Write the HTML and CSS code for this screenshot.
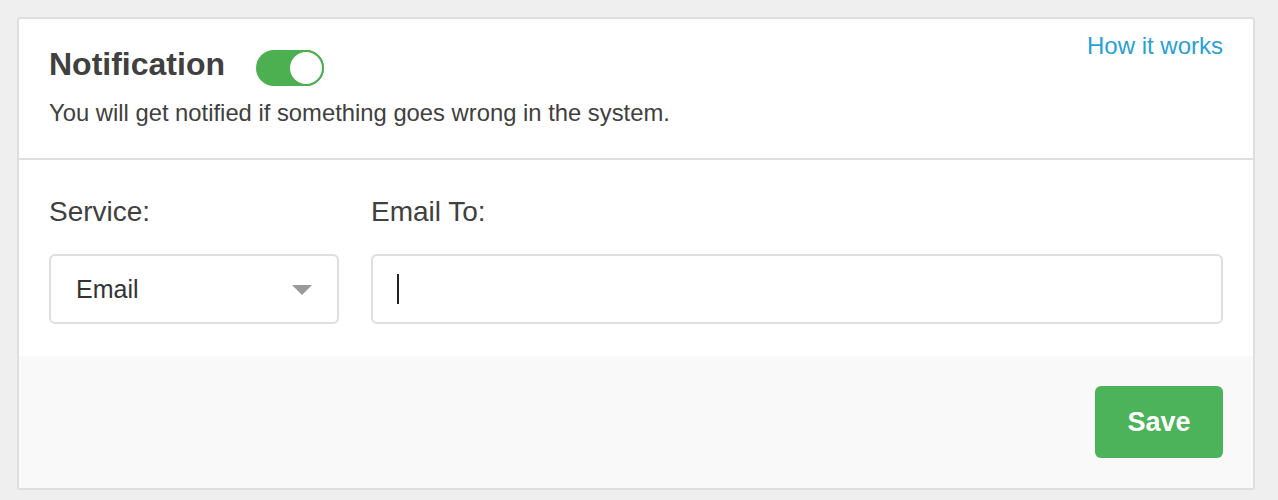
FILE: index.html
```html
<!DOCTYPE html>
<html>
<head>
<meta charset="utf-8">
<link rel="stylesheet" href="styles.css">
</head>
<body>
<div class="card">
  <div class="card-header">
    <div class="header-main">
      <div class="title-row">
        <h1 class="title">Notification</h1>
        <span class="toggle"><span class="knob"></span></span>
      </div>
      <p class="desc">You will get notified if something goes wrong in the system.</p>
    </div>
    <a class="link" href="#">How it works</a>
  </div>
  <div class="card-body">
    <div class="field field-service">
      <label class="label">Service:</label>
      <div class="select"><span class="select-value">Email</span><span class="caret"></span></div>
    </div>
    <div class="field field-email">
      <label class="label">Email To:</label>
      <div class="input"><span class="cursor"></span></div>
    </div>
  </div>
  <div class="card-footer">
    <button class="save">Save</button>
  </div>
</div>
</body>
</html>
```
FILE: styles.css
```css
* { box-sizing: border-box; }
html, body { margin: 0; padding: 0; }
body {
  background: #efefef;
  font-family: "Liberation Sans", Arial, sans-serif;
  color: #404040;
  padding: 17px 0 0 17px;
}
.card {
  width: 1238px;
  background: #fff;
  border: 2px solid #dedede;
  border-radius: 3px;
  overflow: hidden;
}
.card-header {
  display: flex;
  justify-content: space-between;
  align-items: flex-start;
  padding: 14px 30px 0 30px;
  height: 141px;
  border-bottom: 2px solid #dedede;
}
.title-row {
  display: flex;
  align-items: flex-start;
  gap: 31px;
  margin-top: 13px;
}
.title {
  margin: 0;
  font-size: 32px;
  font-weight: bold;
  line-height: 36px;
  color: #404040;
}
.toggle {
  position: relative;
  display: inline-block;
  width: 68px;
  height: 36px;
  border-radius: 18px;
  background: #4caf50;
  margin-top: 4px;
}
.knob {
  position: absolute;
  right: 0;
  top: 0;
  width: 36px;
  height: 36px;
  border-radius: 50%;
  background: #fff;
  border: 2px solid #4caf50;
}
.desc {
  margin: 12px 0 0 0;
  font-size: 23.8px;
  line-height: 30px;
  color: #404040;
}
.link {
  color: #2a9fd6;
  text-decoration: none;
  font-size: 24px;
  line-height: 30px;
  margin-top: -2px;
}
.card-body {
  display: flex;
  gap: 32px;
  padding: 36px 30px 32px 30px;
}
.field { display: flex; flex-direction: column; }
.field-service { width: 290px; }
.field-email { flex: 1; }
.label {
  font-size: 28px;
  line-height: 32px;
  color: #404040;
  margin-bottom: 26px;
}
.select, .input {
  height: 70px;
  border: 2px solid #dedede;
  border-radius: 6px;
  display: flex;
  align-items: center;
  background: #fff;
}
.select {
  justify-content: space-between;
  padding: 0 25px 0 25px;
}
.select-value {
  font-size: 25px;
  color: #333;
}
.caret {
  width: 0;
  height: 0;
  border-left: 10px solid transparent;
  border-right: 10px solid transparent;
  border-top: 10px solid #999;
  margin-top: 2px;
}
.input { padding-left: 24px; }
.cursor {
  display: block;
  width: 2px;
  height: 30px;
  background: #222;
}
.card-footer {
  background: #f9f9f9;
  display: flex;
  justify-content: flex-end;
  padding: 30px 30px 30px 30px;
}
.save {
  width: 128px;
  height: 72px;
  border: none;
  border-radius: 6px;
  background: #4db35a;
  color: #fff;
  font-family: "Liberation Sans", Arial, sans-serif;
  font-size: 27px;
  font-weight: bold;
}
```
